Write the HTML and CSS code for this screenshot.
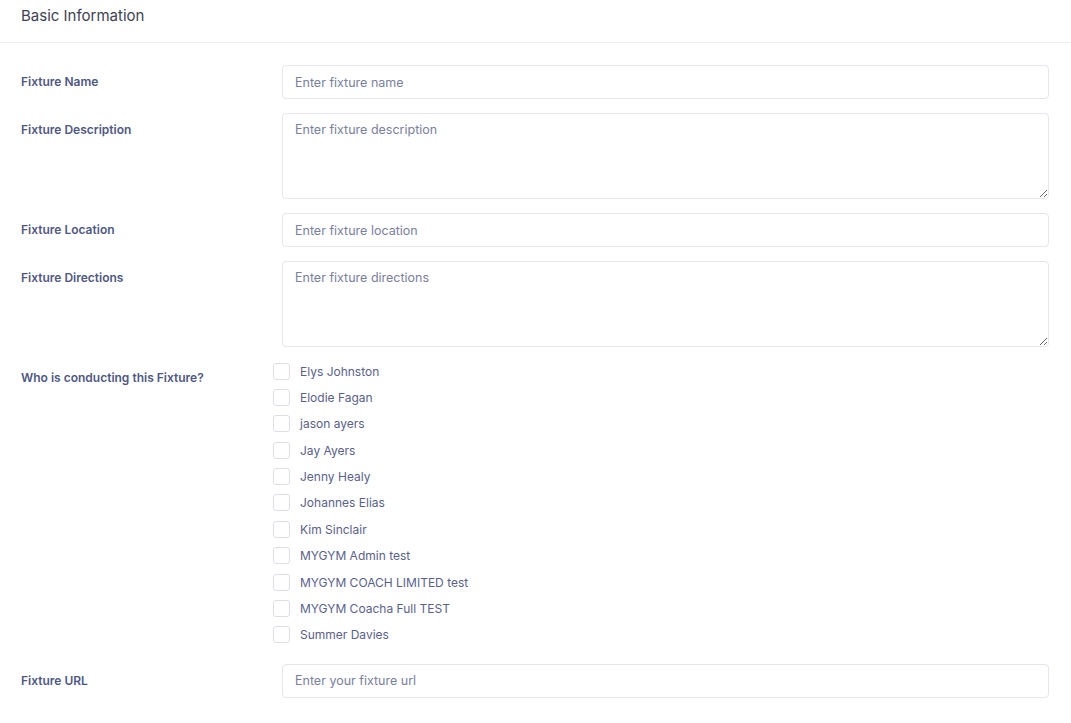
FILE: index.html
```html
<!DOCTYPE html>
<html lang="en">
<head>
  <meta charset="UTF-8" />
  <meta name="viewport" content="width=device-width, initial-scale=1.0" />
  <title>Basic Information</title>
  <link rel="stylesheet" href="styles.css">
</head>
<body>
  <div class="card">
    <div class="card-header">Basic Information</div>

    <form class="card-body">
      <div class="form-row">
        <label class="form-label" for="name">Fixture Name</label>
        <input class="form-control" id="name" type="text" placeholder="Enter fixture name">
      </div>

      <div class="form-row">
        <label class="form-label" for="description">Fixture Description</label>
        <textarea class="form-control" id="description" placeholder="Enter fixture description"></textarea>
      </div>

      <div class="form-row">
        <label class="form-label" for="location">Fixture Location</label>
        <input class="form-control" id="location" type="text" placeholder="Enter fixture location">
      </div>

      <div class="form-row">
        <label class="form-label" for="directions">Fixture Directions</label>
        <textarea class="form-control" id="directions" placeholder="Enter fixture directions"></textarea>
      </div>

      <div class="form-row">
        <span class="form-label">Who is conducting this Fixture?</span>
        <div class="check-list">
          <label class="check"><input type="checkbox"><span>Elys Johnston</span></label>
          <label class="check"><input type="checkbox"><span>Elodie Fagan</span></label>
          <label class="check"><input type="checkbox"><span>jason ayers</span></label>
          <label class="check"><input type="checkbox"><span>Jay Ayers</span></label>
          <label class="check"><input type="checkbox"><span>Jenny Healy</span></label>
          <label class="check"><input type="checkbox"><span>Johannes Elias</span></label>
          <label class="check"><input type="checkbox"><span>Kim Sinclair</span></label>
          <label class="check"><input type="checkbox"><span>MYGYM Admin test</span></label>
          <label class="check"><input type="checkbox"><span>MYGYM COACH LIMITED test</span></label>
          <label class="check"><input type="checkbox"><span>MYGYM Coacha Full TEST</span></label>
          <label class="check"><input type="checkbox"><span>Summer Davies</span></label>
        </div>
      </div>

      <div class="form-row">
        <label class="form-label" for="url">Fixture URL</label>
        <input class="form-control" id="url" type="text" placeholder="Enter your fixture url">
      </div>
    </form>
  </div>
</body>
</html>
```

FILE: styles.css
```css
body {
  margin: 0;
  font-family: Inter, "Open Sans", sans-serif;
  background: #fff;
  color: #3f4254;
}
.card {
  background: #fff;
}
.card-header {
  height: 42px;
  line-height: 31px;
  padding: 0 21px;
  font-size: 15px;
  color: #3f4254;
  border-bottom: 1px solid #ebedf3;
}
.card-body {
  padding: 22px 22px 0 21px;
}
.form-row {
  display: grid;
  grid-template-columns: 261px 1fr;
  margin-bottom: 14px;
}
.form-label {
  padding-top: 7px;
  line-height: 20px;
  font-size: 12px;
  font-weight: 600;
  color: #4f5882;
}
.form-control {
  box-sizing: border-box;
  width: 100%;
  height: 34px;
  margin: 0;
  padding: 0 12px;
  font-family: inherit;
  font-size: 12.5px;
  color: #3f4254;
  border: 1px solid #e4e6ef;
  border-radius: 4px;
  background: #fff;
  outline: none;
}
textarea.form-control {
  height: 86px;
  padding: 7px 12px;
  line-height: 1.5;
  resize: vertical;
}
.form-control::placeholder {
  color: #7a809c;
}
.check-list {
  display: flex;
  flex-direction: column;
  gap: 6.4px;
  margin-left: -9px;
  padding-bottom: 5px;
}
.check {
  display: flex;
  align-items: center;
  height: 20px;
  font-size: 12px;
  color: #5a6189;
  cursor: pointer;
}
.check input {
  appearance: none;
  box-sizing: border-box;
  width: 17px;
  height: 17px;
  margin: 0 10px 0 0;
  border: 1px solid #dcdfe8;
  border-radius: 3px;
  background: #fff;
}
```
